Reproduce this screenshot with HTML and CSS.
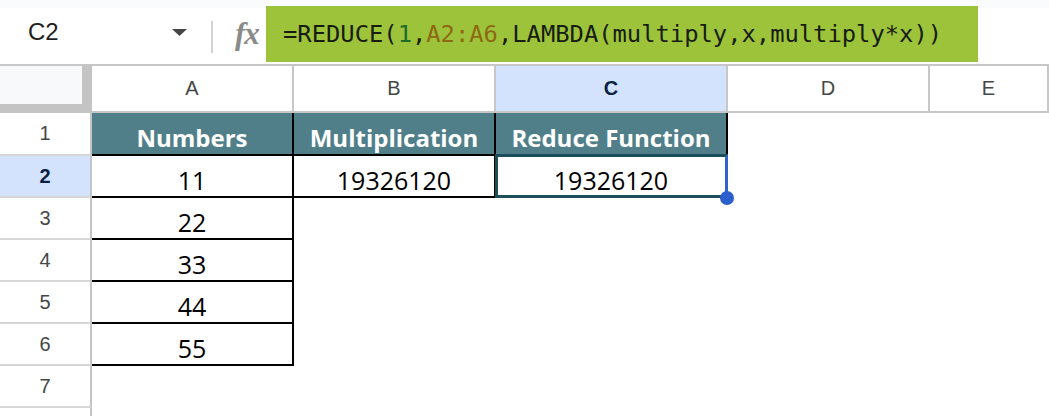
FILE: index.html
```html
<!DOCTYPE html>
<html lang="en">
<head>
  <meta charset="UTF-8" />
  <meta name="viewport" content="width=device-width, initial-scale=1.0"/>
  <title>REDUCE with LAMBDA</title>
  <link rel="stylesheet" href="styles.css">
</head>
<body>
  <div class="formula-bar">
    <div class="name-box">
      <span class="cell-ref">C2</span>
      <svg class="caret" width="15" height="7" viewBox="0 0 15 7"><path d="M0 0 H15 L7.5 7 Z" fill="#444746"/></svg>
    </div>
    <div class="divider"></div>
    <span class="fx">fx</span>
    <div class="formula">=REDUCE(<span class="f-num">1</span>,<span class="f-ref">A2:A6</span>,LAMBDA(multiply,x,multiply*x))</div>
  </div>

  <div class="grid">
    <!-- column headers -->
    <div class="corner"></div>
    <div class="col-head">A</div>
    <div class="col-head">B</div>
    <div class="col-head selected">C</div>
    <div class="col-head">D</div>
    <div class="col-head">E</div>

    <!-- row 1 -->
    <div class="row-head">1</div>
    <div class="cell title">Numbers</div>
    <div class="cell title">Multiplication</div>
    <div class="cell title">Reduce Function</div>
    <div class="cell"></div>
    <div class="cell"></div>

    <!-- row 2 -->
    <div class="row-head selected">2</div>
    <div class="cell value">11</div>
    <div class="cell value">19326120</div>
    <div class="cell value active">19326120<span class="handle"></span></div>
    <div class="cell"></div>
    <div class="cell"></div>

    <div class="row-head">3</div>
    <div class="cell value">22</div>
    <div class="cell"></div><div class="cell"></div><div class="cell"></div><div class="cell"></div>

    <div class="row-head">4</div>
    <div class="cell value">33</div>
    <div class="cell"></div><div class="cell"></div><div class="cell"></div><div class="cell"></div>

    <div class="row-head">5</div>
    <div class="cell value">44</div>
    <div class="cell"></div><div class="cell"></div><div class="cell"></div><div class="cell"></div>

    <div class="row-head">6</div>
    <div class="cell value">55</div>
    <div class="cell"></div><div class="cell"></div><div class="cell"></div><div class="cell"></div>

    <div class="row-head">7</div>
    <div class="cell"></div><div class="cell"></div><div class="cell"></div><div class="cell"></div><div class="cell"></div>

    <!-- last row only peeks in at the bottom -->
    <div class="row-head last"></div>
    <div class="cell"></div><div class="cell"></div><div class="cell"></div><div class="cell"></div><div class="cell"></div>
  </div>
</body>
</html>
```

FILE: styles.css
```css
body {
  margin: 0;
  padding: 0;
  background: #fff;
  color: #1f1f1f;
  font-family: "Liberation Sans", Arial, sans-serif;
  width: 1049px;
  height: 416px;
  overflow: hidden;
}

/* formula bar */
.formula-bar {
  display: flex;
  align-items: flex-start;
  height: 64px;
  border-bottom: 2px solid #c7c7c7;
  background: linear-gradient(#f9fbfd 0 8px, #fff 8px);
}
.name-box {
  display: flex;
  align-items: center;
  width: 211px;
  height: 64px;
  padding-left: 28px;
  box-sizing: border-box;
}
.cell-ref {
  font-size: 24px;
  color: #1f1f1f;
  width: 144px;
}
.caret {
  margin-top: 1px;
}
.divider {
  width: 2px;
  height: 32px;
  margin-top: 21px;
  background: #d2d2d2;
}
.fx {
  margin: 19px 0 0 22px;
  width: 31px;
  font-family: "Liberation Serif", "Times New Roman", serif;
  font-style: italic;
  font-weight: bold;
  font-size: 31px;
  line-height: 30px;
  color: #8a8a8a;
  letter-spacing: -1px;
}
.formula {
  margin-top: 6px;
  width: 712px;
  height: 56px;
  box-sizing: border-box;
  padding-left: 17px;
  background: #9dc33b;
  font-family: "DejaVu Sans Mono", "Liberation Mono", monospace;
  font-size: 23.8px;
  line-height: 56px;
  color: #161c10;
  white-space: nowrap;
}
.f-num { color: #1d6a2c; }
.f-ref { color: #8d6a12; }

/* sheet grid */
.grid {
  display: grid;
  height: 350px;
  grid-template-columns: 92px 202px 202px 232px 202px 1fr;
  grid-template-rows: 47px 43px repeat(6, 42px) 1fr;
}
.grid > div {
  box-sizing: border-box;
}
.corner {
  background: #f8f9fa;
  border-right: 10px solid #c4c4c4;
  border-bottom: 9px solid #c4c4c4;
}
.col-head {
  display: flex;
  align-items: center;
  justify-content: center;
  font-size: 20px;
  color: #444746;
  border-right: 2px solid #c7c7c7;
  border-bottom: 2px solid #c7c7c7;
}
.row-head {
  display: flex;
  align-items: center;
  justify-content: center;
  font-size: 20px;
  color: #444746;
  border-right: 2px solid #c4c4c4;
  border-bottom: 2px solid #d6d6d6;
}
.row-head.last {
  border-bottom: none;
}
.col-head.selected,
.row-head.selected {
  background: #d3e3fd;
  color: #0b1f45;
  font-weight: bold;
}

.cell {
  position: relative;
  display: flex;
  align-items: flex-end;
  justify-content: center;
  padding-bottom: 1px;
  font-family: "Open Sans", sans-serif;
}
.title {
  background: #507f8a;
  color: #fff;
  font-weight: bold;
  font-size: 24px;
  line-height: 30px;
  border-right: 2px solid #000;
  border-bottom: 2px solid #000;
}
.value {
  color: #000;
  font-size: 25px;
  line-height: 30px;
  border-right: 2px solid #000;
  border-bottom: 2px solid #000;
}

/* selected cell C2 */
.active {
  border-color: #1b4d5a;
}
.active::after {
  content: "";
  position: absolute;
  top: -2px;
  left: -1px;
  right: -2px;
  bottom: -2px;
  border: 3px solid #1b4d5a;
  border-right-color: #2f64cf;
}
.handle {
  position: absolute;
  right: -8px;
  bottom: -9px;
  width: 14px;
  height: 14px;
  border-radius: 50%;
  background: #2a5fcc;
  z-index: 1;
}
```
